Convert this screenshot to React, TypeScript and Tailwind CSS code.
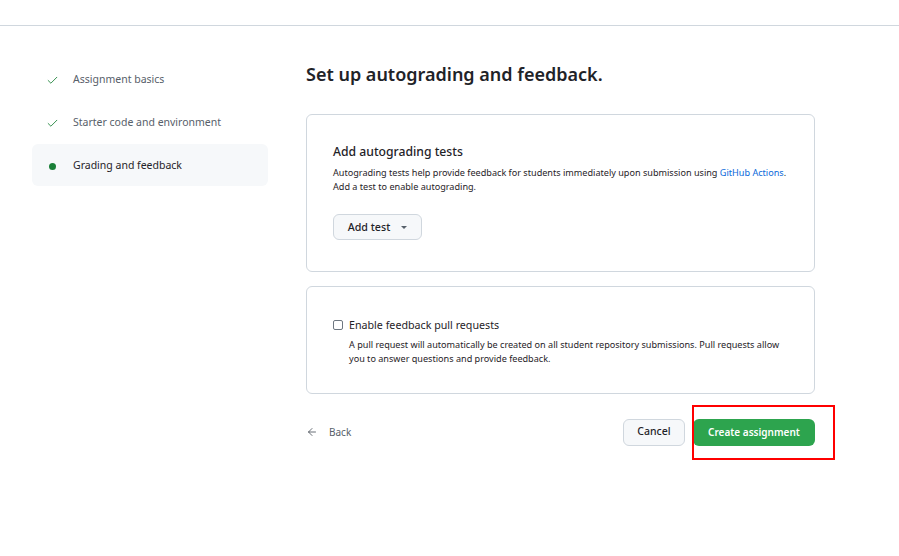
import { Check, ArrowLeft } from "lucide-react";

const steps = [
  { label: "Assignment basics", done: true },
  { label: "Starter code and environment", done: true },
  { label: "Grading and feedback", done: false },
];

export default function App() {
  return (
    <div className="min-h-[556px] bg-white text-[#1f2328]" style={{ fontFamily: '"Noto Sans", "Open Sans", sans-serif' }}>
      <div className="h-[26px] border-b border-[#d0d7de]" />
      <div className="flex pt-[32px]">
        <div className="w-[236px] ml-[32px] flex flex-col gap-px">
          {steps.map((s) => (
            <div key={s.label} className={`h-[42px] pt-[2px] flex items-center rounded-md ${s.done ? "" : "bg-[#f6f8fa]"}`}>
              <div className="w-[41px] flex justify-center">
                {s.done ? <Check size={13} strokeWidth={1.6} className="text-[#1a7f37]" /> : <span className="block w-[7px] h-[7px] rounded-full bg-[#1a7f37]" />}
              </div>
              <span className={`text-[10.5px] ${s.done ? "text-[#57606a]" : "text-[#1f2328]"}`}>{s.label}</span>
            </div>
          ))}
        </div>
        <div className="ml-[38px] w-[509px]">
          <h1 className="mt-[4px] text-[18px] font-semibold leading-[24px]">Set up autograding and feedback.</h1>
          <div className="mt-[28px] h-[158px] border border-[#d0d7de] rounded-md px-[26px] pt-[28px]">
            <h2 className="text-[12.2px] font-medium leading-[18px]">Add autograding tests</h2>
            <p className="mt-[5px] whitespace-nowrap text-[9.1px] leading-[14px] text-[#1f2328]">
              Autograding tests help provide feedback for students immediately upon submission using <span className="text-[#0969da]">GitHub Actions</span>.
              <br />
              Add a test to enable autograding.
            </p>
            <button className="mt-[20px] h-[26px] w-[89px] flex items-center justify-center gap-[11px] rounded-md border border-[#d0d7de] bg-[#f6f8fa] text-[10.7px] font-medium">
              Add test
              <span className="block w-0 h-0 border-l-[3px] border-r-[3px] border-t-[3px] border-l-transparent border-r-transparent border-t-[#57606a]" />
            </button>
          </div>
          <div className="mt-[14px] h-[108px] border border-[#d0d7de] rounded-md px-[26px] pt-[30px]">
            <label className="flex items-center gap-[6px]">
              <span className="block w-[10px] h-[10px] rounded-[2px] border border-[#6e7781] bg-white" />
              <span className="text-[10.7px] leading-[16px]">Enable feedback pull requests</span>
            </label>
            <p className="ml-[16px] mt-[5px] whitespace-nowrap text-[9.1px] leading-[14px] text-[#1f2328]">
              A pull request will automatically be created on all student repository submissions. Pull requests allow
              <br />
              you to answer questions and provide feedback.
            </p>
          </div>
          <div className="mt-[24px] flex items-center">
            <div className="flex items-center text-[#57606a]">
              <ArrowLeft size={12} strokeWidth={1.6} className="text-[#424a53]" />
              <span className="ml-[11px] text-[10px]">Back</span>
            </div>
            <div className="ml-auto flex items-center gap-[8px]">
              <button className="h-[27px] w-[62px] rounded-md border border-[#d0d7de] bg-[#f6f8fa] text-[10.5px] font-medium">Cancel</button>
              <div className="relative">
                <button className="h-[27px] w-[122px] rounded-md bg-[#2da44e] text-white text-[10px] font-semibold">Create assignment</button>
                <div className="absolute left-[-1px] top-[-13px] w-[143px] h-[55px] border-2 border-[#ff0000]" />
              </div>
            </div>
          </div>
        </div>
      </div>
    </div>
  );
}
